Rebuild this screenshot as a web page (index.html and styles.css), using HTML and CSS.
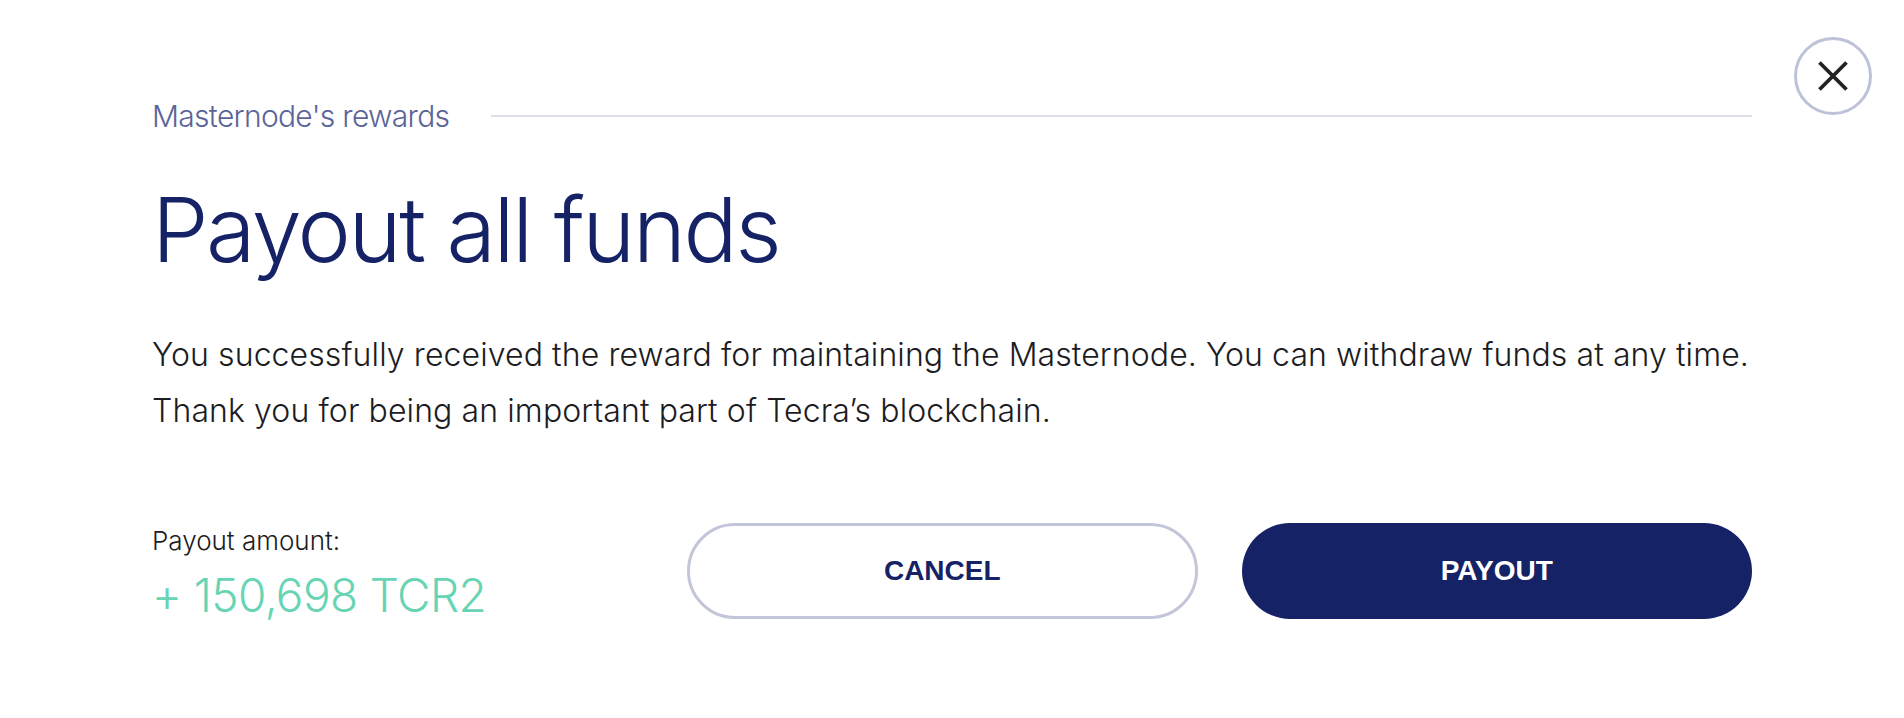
FILE: index.html
```html
<!DOCTYPE html>
<html lang="en">
<head>
<meta charset="utf-8">
<title>Payout all funds</title>
<link rel="stylesheet" href="styles.css">
</head>
<body>
<div class="modal">
  <div class="content">
    <div class="header">
      <span class="subtitle">Masternode's rewards</span>
      <span class="rule"></span>
    </div>
    <h1 class="title">Payout all funds</h1>
    <p class="text">You successfully received the reward for maintaining the Masternode. You can withdraw funds at any time.<br>Thank you for being an important part of Tecra’s blockchain.</p>
    <div class="actions">
      <div class="amount-box">
        <div class="amount-label">Payout amount:</div>
        <div class="amount">+ 150,698 TCR2</div>
      </div>
      <button class="btn btn-outline">CANCEL</button>
      <button class="btn btn-solid">PAYOUT</button>
    </div>
  </div>
  <button class="close" aria-label="Close">
    <svg width="30" height="30" viewBox="0 0 30 30"><path d="M1.5 1.5 L28.5 28.5 M28.5 1.5 L1.5 28.5" stroke="#222222" stroke-width="3.8" stroke-linecap="butt" fill="none"/></svg>
  </button>
</div>
</body>
</html>
```
FILE: styles.css
```css
html, body {
  margin: 0;
  padding: 0;
  background: #ffffff;
}
body {
  font-family: Inter, "Noto Sans", sans-serif;
  font-weight: 300;
  color: #1c1c22;
}
.modal {
  display: flex;
  align-items: flex-start;
  height: 718px;
  box-sizing: border-box;
}
.content {
  width: 1600px;
  margin-left: 152px;
  padding-top: 98px;
}
.header {
  display: flex;
  align-items: center;
  height: 36px;
}
.subtitle {
  font-size: 30px;
  line-height: 36px;
  color: #5b6498;
  letter-spacing: -0.7px;
  white-space: nowrap;
}
.rule {
  flex: 1;
  height: 2px;
  background: #dcdeea;
  margin-left: 42px;
}
.title {
  margin: 46px 0 0 0;
  font-size: 90px;
  line-height: 100px;
  font-weight: 300;
  color: #152266;
  letter-spacing: -2.4px;
}
.text {
  margin: 47px 0 0 0;
  font-size: 32px;
  line-height: 56px;
  color: #1c1c22;
  letter-spacing: 0.1px;
}
.actions {
  margin-top: 84px;
  display: grid;
  grid-template-columns: 491px 1fr 1fr;
  column-gap: 44px;
  align-items: start;
}
.amount-box {
  padding-top: 2px;
}
.amount-label {
  font-size: 26px;
  line-height: 32px;
  color: #1c1c22;
}
.amount {
  margin-top: 10px;
  font-size: 46px;
  line-height: 56px;
  color: #67d4b4;
  letter-spacing: -0.6px;
}
.btn {
  height: 96px;
  border-radius: 48px;
  font-family: "Liberation Sans", Arial, sans-serif;
  font-weight: 700;
  font-size: 28px;
  letter-spacing: 0;
  cursor: pointer;
}
.btn-outline {
  background: #ffffff;
  border: 3px solid #c3c6d9;
  color: #152266;
}
.btn-solid {
  background: #152266;
  border: 0;
  color: #ffffff;
}
.close {
  margin-left: 42px;
  margin-top: 37px;
  width: 78px;
  height: 78px;
  border-radius: 50%;
  border: 3.5px solid #bcc2d7;
  background: #ffffff;
  display: flex;
  align-items: center;
  justify-content: center;
  padding: 0;
  box-sizing: border-box;
}
.close svg {
  display: block;
}
```
